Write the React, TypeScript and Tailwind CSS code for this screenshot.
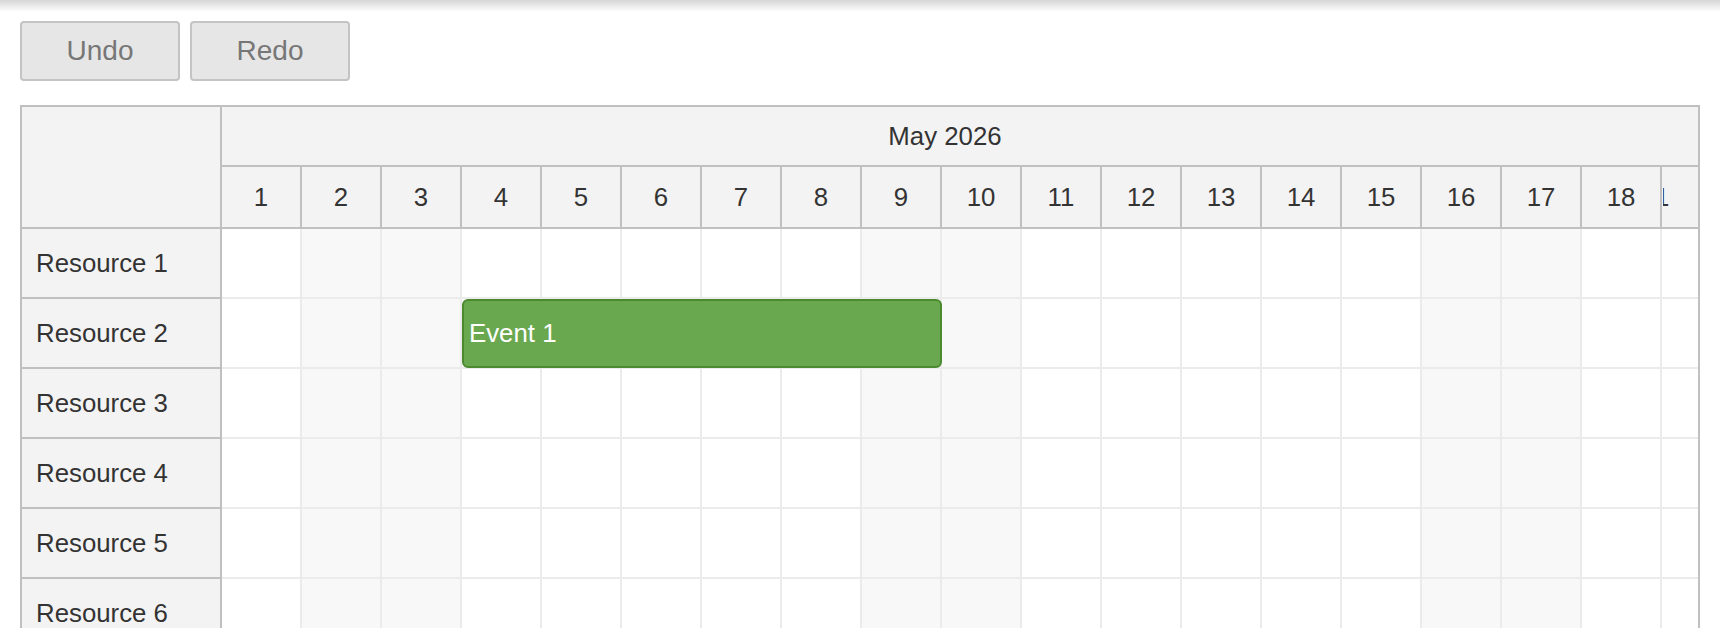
import React from "react";

const days = Array.from({ length: 18 }, (_, i) => i + 1);
const weekend = new Set([2, 3, 9, 10, 16, 17]);
const resources = ["Resource 1", "Resource 2", "Resource 3", "Resource 4", "Resource 5", "Resource 6", "Resource 7"];

export default function App() {
  return (
    <div className="h-screen w-full overflow-hidden bg-white font-['Liberation_Sans',Arial,sans-serif] text-[#333]">
      <div className="h-[12px] bg-linear-to-b from-[#d6d6d6] to-white" />
      <div className="px-[20px] pt-[9px]">
        <div className="flex gap-[10px]">
          <button className="w-[160px] h-[60px] rounded-[4px] border-2 border-[#c4c4c4] bg-[#e6e6e6] text-[28px] text-[#777]">
            Undo
          </button>
          <button className="w-[160px] h-[60px] rounded-[4px] border-2 border-[#c4c4c4] bg-[#e6e6e6] text-[28px] text-[#777]">
            Redo
          </button>
        </div>

        <div className="mt-[24px] flex w-[1680px] border-2 border-[#c0c0c0] text-[25.8px]">
          {/* left column */}
          <div className="w-[200px] shrink-0 border-r-2 border-[#c0c0c0] bg-[#f3f3f3] flex flex-col">
            <div className="h-[122px] border-b-2 border-[#c0c0c0]" />
            {resources.map((r) => (
              <div key={r} className="h-[70px] shrink-0 border-b-2 border-[#c0c0c0] flex items-center pl-[14px] pt-[1px]">
                {r}
              </div>
            ))}
          </div>

          {/* right area */}
          <div className="flex-1 min-w-0 overflow-hidden flex flex-col">
            <div className="h-[60px] shrink-0 border-b-2 border-[#c0c0c0] bg-[#f3f3f3] flex items-center justify-center pr-[30px]">
              May 2026
            </div>
            <div className="h-[62px] shrink-0 border-b-2 border-[#c0c0c0] bg-[#f3f3f3] flex">
              {days.map((d) => (
                <div key={d} className="w-[80px] shrink-0 border-r-2 border-[#c0c0c0] flex items-center justify-center">
                  {d}
                </div>
              ))}
              <div className="flex-1 relative overflow-hidden">
                <div className="absolute left-[1px] top-0 h-full w-[7px] overflow-hidden">
                  <span className="absolute left-[-8px] top-1/2 -translate-y-1/2 whitespace-nowrap">19</span>
                </div>
              </div>
            </div>

            {resources.map((r, ri) => (
              <div key={r} className="relative h-[70px] shrink-0 flex">
                {days.map((d) => (
                  <div
                    key={d}
                    className={
                      "w-[80px] shrink-0 border-r-2 border-b-2 border-[#ebebeb] " +
                      (weekend.has(d) ? "bg-[#f8f8f8]" : "bg-white")
                    }
                  />
                ))}
                <div className="flex-1 border-b-2 border-[#ebebeb] bg-white" />
                {ri === 1 && (
                  <div className="absolute left-[240px] top-0 w-[480px] h-[69px] rounded-[6px] border-2 border-[#4b8a2e] bg-[#6aa84f] text-white flex items-center pl-[5px]">
                    Event 1
                  </div>
                )}
              </div>
            ))}
          </div>
        </div>
      </div>
    </div>
  );
}
